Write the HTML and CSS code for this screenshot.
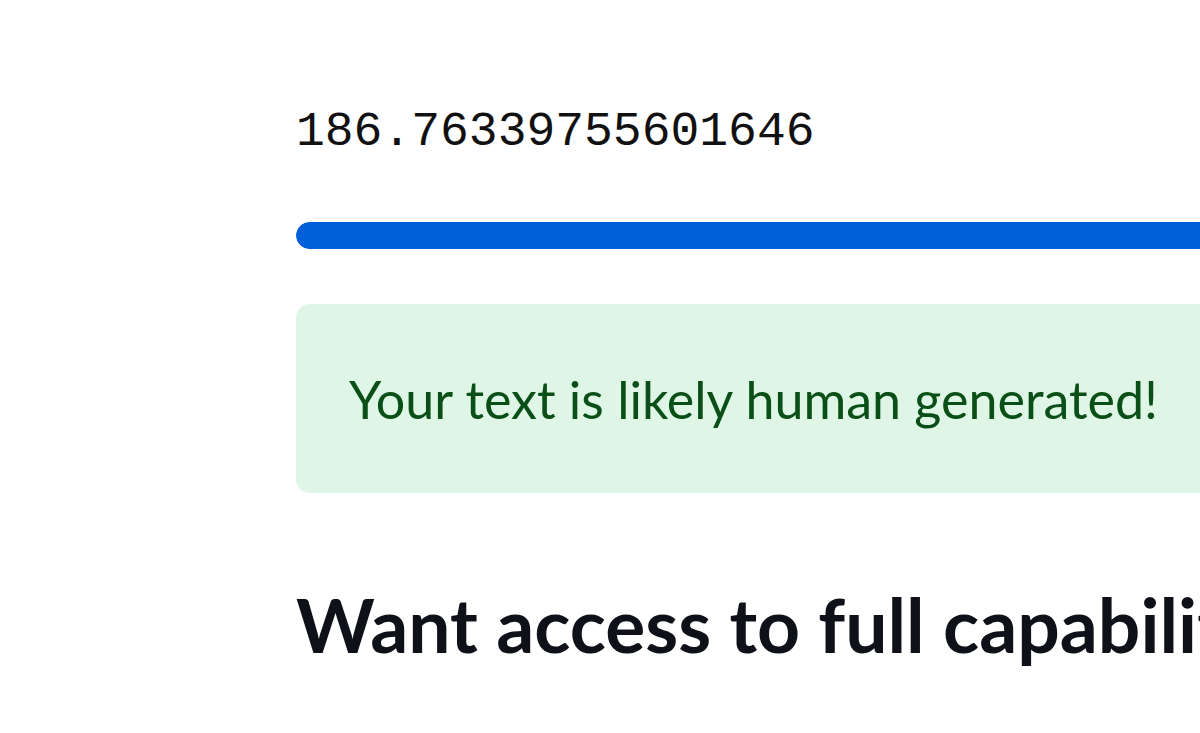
FILE: index.html
```html
<!DOCTYPE html>
<html lang="en">
<head>
    <meta charset="UTF-8">
    <meta name="viewport" content="width=device-width, initial-scale=1.0">
    <title>AI Text Detector</title>
    <link rel="stylesheet" href="styles.css">
</head>
<body>
    <main class="main">
        <section class="block">
            <pre class="score">186.76339755601646</pre>
        </section>
        <section class="block">
            <div class="progress"><div class="progress-fill" style="width: 100%"></div></div>
        </section>
        <section class="block">
            <div class="alert-success">
                <p>Your text is likely human generated!</p>
            </div>
        </section>
        <section class="block">
            <h2 class="cta-title">Want access to full capabilities?</h2>
        </section>
    </main>
</body>
</html>
```

FILE: styles.css
```css
html, body {
    margin: 0;
    padding: 0;
    background: #fff;
    overflow: hidden;
}

body {
    font-family: Lato, "Noto Sans", sans-serif;
    color: #111;
}

.main {
    width: 1400px;
    margin-left: 296px;
    padding-top: 104px;
}

.score {
    margin: 0;
    font-family: "Liberation Mono", "Courier New", monospace;
    font-size: 48px;
    line-height: 56px;
    color: #111;
}

.progress {
    margin-top: 62px;
    height: 27px;
    border-radius: 14px;
    background: #e8eaf0;
    overflow: hidden;
}

.progress-fill {
    height: 100%;
    background: #005fd9;
    border-radius: 14px;
}

.alert-success {
    margin-top: 55px;
    height: 189px;
    box-sizing: border-box;
    padding: 0 53px;
    display: flex;
    align-items: center;
    background: #dff6e7;
    border-radius: 14px;
}

.alert-success p {
    margin: 0;
    font-size: 52px;
    color: #0a4f17;
}

.cta-title {
    margin: 86px 0 0;
    font-size: 75px;
    font-weight: 700;
    line-height: 1.2;
    color: #0e1117;
}
```
